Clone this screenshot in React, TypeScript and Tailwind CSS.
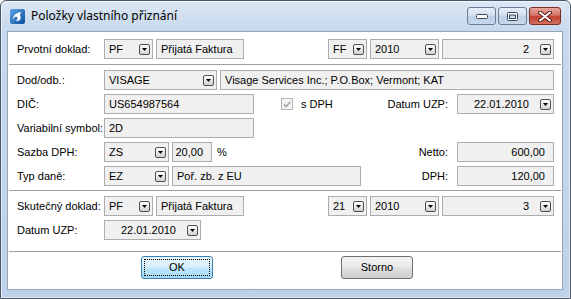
import clsx from 'clsx';
import type { ReactNode } from 'react';

const DropBtn = () => (
  <span className="flex h-[11px] w-[11px] shrink-0 items-center justify-center rounded-[2px] border border-[#4f4f4f] bg-[linear-gradient(#ffffff,#d2d2d2)]">
    <svg width="5" height="3" viewBox="0 0 5 3">
      <path d="M0 0h5L2.5 3z" fill="#000" />
    </svg>
  </span>
);

type BoxProps = {
  className?: string;
  children?: ReactNode;
  right?: boolean;
  drop?: boolean;
};

const Box = ({ className, children, right, drop }: BoxProps) => (
  <div className={clsx('flex h-5 shrink-0 items-center border border-[#adadad] bg-[#f0f0f0] text-black', className)}>
    <span
      className={clsx(
        'flex-1 truncate whitespace-pre',
        right ? (drop ? 'pr-[11px] text-right' : 'pr-[8px] text-right') : 'pl-[4px]'
      )}
    >
      {children}
    </span>
    {drop && (
      <span className="mr-[2px]">
        <DropBtn />
      </span>
    )}
  </div>
);

const Label = ({ children }: { children: ReactNode }) => (
  <span className="w-[87px] shrink-0">{children}</span>
);

const RightField = ({ label, value, drop }: { label: string; value: string; drop?: boolean }) => (
  <div className="ml-auto flex items-center">
    <span className="mr-[9px] text-right">{label}</span>
    <Box className="w-[97px]" right drop={drop}>
      {value}
    </Box>
  </div>
);

const Separator = ({ className }: { className?: string }) => (
  <div className={clsx('mx-[1px] h-px bg-[#a0a0a0]', className)} />
);

const DocRow = ({ label, code, serie, num }: { label: string; code: string; serie: string; num: string }) => (
  <div className="flex h-5 items-center">
    <Label>{label}</Label>
    <Box className="w-[49px]" drop>
      PF
    </Box>
    <Box className="ml-[3px] w-[88px]">Přijatá Faktura</Box>
    <div className="ml-auto flex items-center gap-[3px]">
      <Box className="w-[39px]" drop>
        {code}
      </Box>
      <Box className="w-[69px]" drop>
        {serie}
      </Box>
      <Box className="w-[112px]" right drop>
        {num}
      </Box>
    </div>
  </div>
);

const CaptionBtn = ({ kind }: { kind: 'min' | 'max' | 'close' }) => (
  <div
    className={clsx(
      'flex h-[18px] items-center justify-center rounded-[3px] border',
      kind === 'close'
        ? 'w-[32px] border-[#7b2b22] bg-[linear-gradient(#e8a99f_0%,#d47366_45%,#c2402f_55%,#d3705f_100%)]'
        : 'w-[29px] border-[#6b7c92] bg-[linear-gradient(#e6eef8_0%,#d3e0ef_45%,#bccfe6_55%,#c8d9ed_100%)]'
    )}
  >
    {kind === 'min' && (
      <svg width="12" height="5" viewBox="0 0 12 5">
        <rect x="0.5" y="0.5" width="11" height="4" rx="1" fill="#fff" stroke="#3a4758" />
      </svg>
    )}
    {kind === 'max' && (
      <svg width="11" height="9" viewBox="0 0 11 9">
        <rect x="0.5" y="0.5" width="10" height="8" rx="1" fill="#fff" stroke="#3a4758" />
        <rect x="2.5" y="3" width="6" height="3.5" fill="#c9d8ea" stroke="#3a4758" />
      </svg>
    )}
    {kind === 'close' && (
      <svg width="14" height="11" viewBox="0 0 14 11">
        <path
          d="M2 1.5L7 5.5L12 1.5M2 9.5L7 5.5L12 9.5"
          fill="none"
          stroke="#5a1f18"
          strokeWidth="4"
          strokeLinecap="round"
        />
        <path
          d="M2 1.5L7 5.5L12 1.5M2 9.5L7 5.5L12 9.5"
          fill="none"
          stroke="#fff"
          strokeWidth="2"
          strokeLinecap="round"
        />
      </svg>
    )}
  </div>
);

const AppIcon = () => (
  <svg width="15" height="15" viewBox="0 0 15 15">
    <defs>
      <linearGradient id="ic" x1="0" y1="0" x2="1" y2="1">
        <stop offset="0" stopColor="#5aa2e6" />
        <stop offset="1" stopColor="#0d4f9e" />
      </linearGradient>
    </defs>
    <rect x="0" y="0" width="15" height="15" rx="2" fill="url(#ic)" />
    <path d="M3 10.5C3 6 6.5 3.5 11.5 3C10 4.5 9.5 6 10.5 8C11.5 10.5 8.5 12.5 5.5 12C7.5 11 8 9.5 7 8C6 6.5 4.5 8 3 10.5z" fill="#fff" />
  </svg>
);

export default function App() {
  return (
    <div className="h-[299px] w-[571px] bg-white font-['Liberation_Sans',Arial,sans-serif] text-[11px] text-black">
      <div className="flex h-full w-full flex-col rounded-t-[6px] border border-[#4c5868] bg-[linear-gradient(#dce7f4_0px,#c6d8ed_30px,#bdd2ea_100%)] pb-[8px] pl-[6px] pr-[7px] shadow-[inset_0_0_0_1px_rgba(255,255,255,0.55)]">
        {/* title bar */}
        <div className="flex h-[30px] shrink-0 items-center pl-[3px] pr-[2px]">
          <AppIcon />
          <span className="ml-[6px] font-['Noto_Sans',sans-serif] text-[12px] text-black">Položky vlastního přiznání</span>
          <div className="ml-auto flex items-center gap-[2px]">
            <CaptionBtn kind="min" />
            <CaptionBtn kind="max" />
            <CaptionBtn kind="close" />
          </div>
        </div>

        {/* client area */}
        <div className="flex flex-1 flex-col border border-[#9aa5b3] bg-white pl-[9px] pr-[8px] pt-[7px]">
          <DocRow label="Prvotní doklad:" code="FF" serie="2010" num="2" />
          <Separator className="-ml-[8px] -mr-[7px] mb-[5px] mt-[5px]" />

          <div className="flex flex-col gap-1">
            <div className="flex h-5 items-center">
              <Label>Dod/odb.:</Label>
              <Box className="w-[113px]" drop>
                VISAGE
              </Box>
              <Box className="ml-[3px] flex-1">Visage Services Inc.; P.O.Box; Vermont; KAT</Box>
            </div>
            <div className="flex h-5 items-center">
              <Label>DIČ:</Label>
              <Box className="w-[150px]">US654987564</Box>
              <span className="ml-[27px] flex h-[12px] w-[12px] items-center justify-center border border-[#b5b5b5] bg-[#f4f4f4]">
                <svg width="8" height="7" viewBox="0 0 8 7">
                  <path d="M0.8 3.5L3 5.6L7.2 1" fill="none" stroke="#a3a3a3" strokeWidth="1.6" />
                </svg>
              </span>
              <span className="ml-[8px]">s DPH</span>
              <RightField label="Datum UZP:" value="22.01.2010" drop />
            </div>
            <div className="flex h-5 items-center">
              <Label>Variabilní symbol:</Label>
              <Box className="w-[150px]">2D</Box>
            </div>
            <div className="flex h-5 items-center">
              <Label>Sazba DPH:</Label>
              <Box className="w-[65px]" drop>
                ZS
              </Box>
              <Box className="ml-[3px] w-[40px]" right>
                20,00
              </Box>
              <span className="-ml-[3px] pl-[8px]">%</span>
              <RightField label="Netto:" value="600,00" />
            </div>
            <div className="flex h-5 items-center">
              <Label>Typ daně:</Label>
              <Box className="w-[65px]" drop>
                EZ
              </Box>
              <Box className="ml-[3px] w-[189px]">Poř. zb. z EU</Box>
              <RightField label="DPH:" value="120,00" />
            </div>
          </div>

          <Separator className="-ml-[8px] -mr-[7px] mb-[5px] mt-[4px]" />

          <div className="flex flex-col gap-1">
            <DocRow label="Skutečný doklad:" code="21" serie="2010" num="3" />
            <div className="flex h-5 items-center">
              <Label>Datum UZP:</Label>
              <Box className="w-[97px]" right drop>
                22.01.2010
              </Box>
            </div>
          </div>

          <Separator className="-ml-[8px] -mr-[7px] mb-[4px] mt-[11px]" />

          <div className="flex items-center pl-[124px]">
            <button className="flex h-[23px] w-[72px] items-center justify-center rounded-[3px] border border-[#3c7fb1] bg-[linear-gradient(#eaf6fd_0%,#d9f0fc_45%,#bee6fd_55%,#a7d9f5_100%)] p-[2px]">
              <span className="flex h-full w-full items-center justify-center border border-dotted border-black">OK</span>
            </button>
            <button className="ml-[128px] flex h-[23px] w-[72px] items-center justify-center rounded-[3px] border border-[#707070] bg-[linear-gradient(#f2f2f2_0%,#ebebeb_45%,#dddddd_55%,#cfcfcf_100%)]">
              Storno
            </button>
          </div>
        </div>
      </div>
    </div>
  );
}
